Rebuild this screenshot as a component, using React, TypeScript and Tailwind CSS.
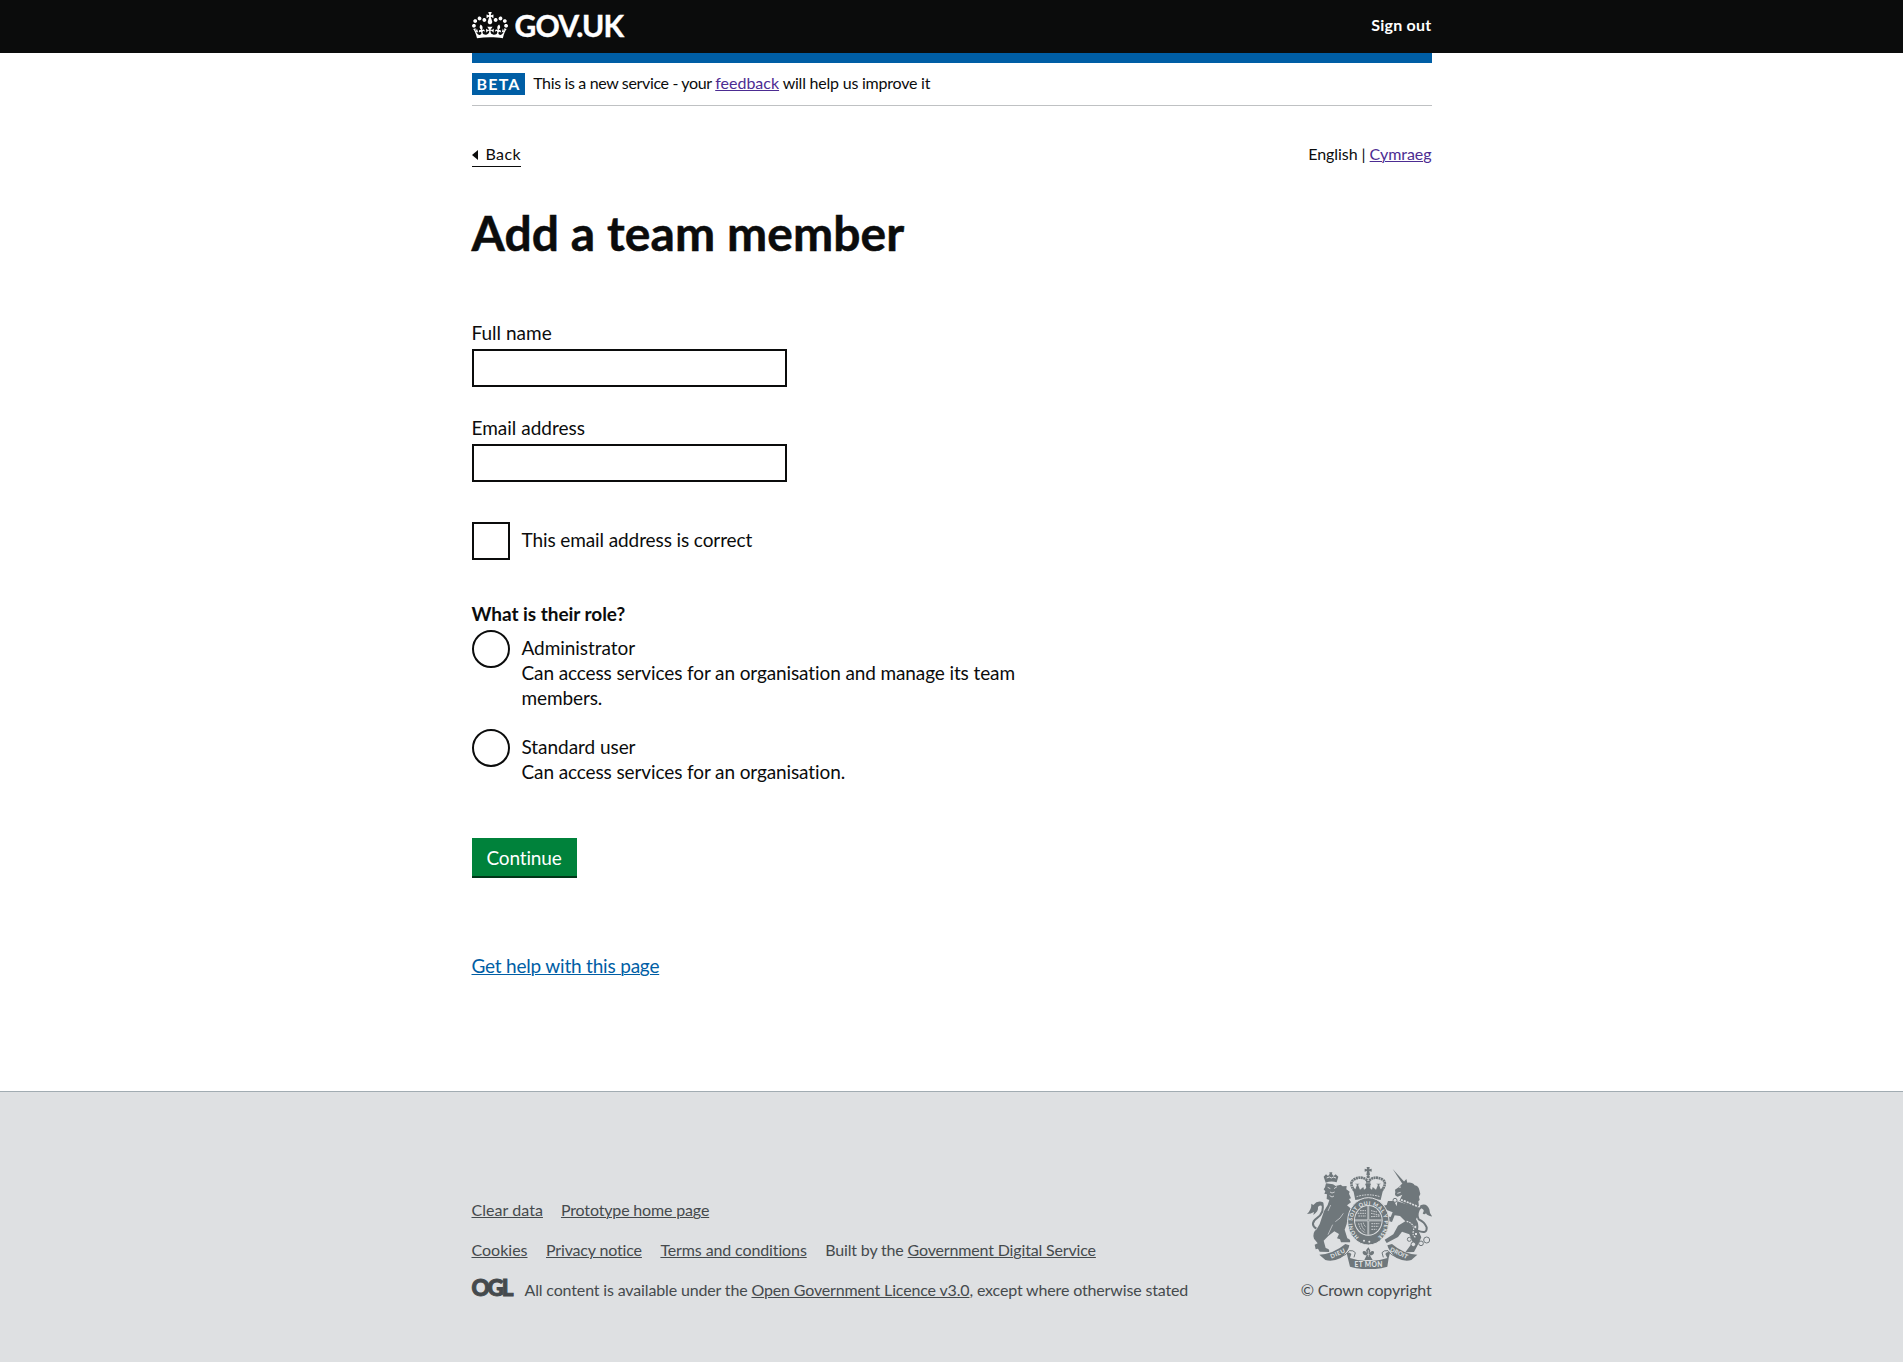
import type { ReactNode } from "react";

function Crown() {
  return (
    <svg aria-hidden="true" viewBox="0 0 132 97" className="mt-3 h-[26.5px] w-9" fill="currentColor">
      <path d="M25 30.2c3.5 1.5 7.7-.2 9.1-3.7 1.5-3.6-.2-7.8-3.9-9.2-3.6-1.4-7.6.3-9.1 3.9-1.4 3.5.3 7.5 3.9 9zM9 39.5c3.6 1.5 7.8-.2 9.2-3.7 1.5-3.6-.2-7.8-3.9-9.1-3.6-1.5-7.6.2-9.1 3.8-1.4 3.5.3 7.5 3.8 9zM4.4 57.2c3.5 1.5 7.7-.2 9.1-3.8 1.5-3.6-.2-7.7-3.9-9.1-3.5-1.5-7.6.3-9.1 3.8-1.4 3.5.3 7.6 3.9 9.1zm38.3-21.4c3.5 1.5 7.7-.2 9.1-3.8 1.5-3.6-.2-7.7-3.9-9.1-3.6-1.5-7.6.3-9.1 3.8-1.3 3.6.4 7.7 3.9 9.1zm64.4-5.6c-3.6 1.5-7.8-.2-9.1-3.7-1.5-3.6.2-7.8 3.8-9.2 3.6-1.4 7.7.3 9.2 3.9 1.3 3.5-.4 7.5-3.9 9zm15.9 9.3c-3.6 1.5-7.7-.2-9.1-3.7-1.5-3.6.2-7.8 3.7-9.1 3.6-1.5 7.7.2 9.2 3.8 1.5 3.5-.3 7.5-3.8 9zm4.7 17.7c-3.6 1.5-7.8-.2-9.2-3.8-1.5-3.6.2-7.7 3.9-9.1 3.6-1.5 7.7.3 9.2 3.8 1.3 3.5-.4 7.6-3.9 9.1zM89.3 35.8c-3.6 1.5-7.8-.2-9.2-3.8-1.4-3.6.2-7.7 3.9-9.1 3.6-1.5 7.7.3 9.2 3.8 1.4 3.6-.3 7.7-3.9 9.1zM69.7 17.7l8.9 4.7V9.3l-8.9 2.8c-.2-.3-.5-.6-.9-.9L72.4 0H59.6l3.5 11.2c-.3.3-.6.5-.9.9l-8.8-2.8v13.1l8.8-4.7c.3.3.6.7.9.9l-5 15.4v.1c-.2.8-.4 1.6-.4 2.4 0 4.1 3.1 7.5 7 8.1h.2c.3 0 .7.1 1 .1.4 0 .7 0 1-.1h.2c4-.6 7.1-4.1 7.1-8.1 0-.8-.1-1.7-.4-2.4V34l-5.1-15.4c.4-.2.7-.6 1-.9zM66 92.8c16.9 0 32.8 1.1 47.1 3.2 4-16.9 8.9-26.7 14-33.5l-9.6-3.4c1 4.9 1.1 7.2 0 10.2-1.5-1.4-3-4.3-4.2-8.7L108.6 76c2.8-2 5-3.2 7.5-3.3-4.4 9.4-10 11.9-13.6 11.2-4.3-.8-6.3-4.6-5.6-7.9 1-4.7 5.7-5.9 8-.5 4.3-8.7-3-11.4-7.6-8.8 7.1-7.2 7.9-13.5 2.1-21.1-8 6.1-8.1 12.3-4.5 20.8-4.7-5.4-12.1-2.5-9.5 6.2 3.4-5.2 7.9-2 7.2 3.1-.6 4.3-6.4 7.8-13.5 7.2-10.3-.9-10.9-8-11.2-13.8 2.5-.5 7.1 1.8 11 7.3L80.2 60c-4.1 4.4-8 5.3-12.3 5.4 1.4-4.4 8-11.6 8-11.6H55.5s6.4 7.2 7.9 11.6c-4.2-.1-8-1-12.3-5.4l1.4 16.4c3.9-5.5 8.5-7.7 10.9-7.3-.3 5.8-.9 12.8-11.1 13.8-7.2.6-12.9-2.9-13.5-7.2-.7-5 3.8-8.3 7.1-3.1 2.7-8.7-4.6-11.6-9.4-6.2 3.7-8.5 3.6-14.7-4.6-20.8-5.8 7.6-5 13.9 2.2 21.1-4.7-2.6-11.9.1-7.7 8.8 2.3-5.5 7.1-4.2 8.1.5.7 3.3-1.3 7.1-5.7 7.9-3.5.7-9-1.8-13.5-11.2 2.5.1 4.7 1.3 7.5 3.3l-4.7-15.4c-1.2 4.4-2.7 7.2-4.3 8.7-1.1-3-.9-5.3 0-10.2l-9.5 3.4c5 6.9 9.9 16.7 14 33.5 14.8-2.1 30.8-3.2 47.7-3.2z" />
    </svg>
  );
}

function CoatOfArms() {
  const ink = "#6f777b";
  const paper = "#dee0e2";
  return (
    <svg aria-hidden="true" viewBox="51 51 375 306" className="h-[102px] w-[125px]" fill={ink}>
      {/* centre crown */}
      <path d="M230 51h9l-1 7 7-2v9l-7-2 2 12h-11l2-12-7 2v-9l7 2z" />
      <circle cx="234.500" cy="80" r="5" />
      <path d="M193 122Q176 98 192 88Q216 76 232 92V124M275 122Q293 98 277 88Q253 76 237 92V124" fill="none" stroke={ink} strokeWidth="8" strokeDasharray="6 1.500" />
      <path d="M188 112l8 6 5-14-6-3h14l-5 3 6 15 10-8 2 8 8-6-5-12h18l-5 12 8 6 2-8 10 8 6-15-5-3h14l-6 3 5 14 9-6-9 38Q234 142 196 150z" />
      <path d="M200 140Q234 129 270 140" fill="none" stroke={paper} strokeWidth="3" strokeDasharray="5 3" />
      {/* lion crown */}
      <path d="M107 98l-6-18 7-7 6 5 5-6-1-5h9l-1 5 5 6 6-5 8 7-5 17q-16-5-33 1z" />
      <path d="M110 84l8-3 6 3 6-3 8 3" fill="none" stroke={paper} strokeWidth="3" />
      {/* lion */}
      <path d="M108 100l-3 12-4 6 5 6-3 7 8 2-1 14 8 3-5 15Q99 184 95 204Q91 222 80 238Q66 248 72 266L83 280l-9 4 3 14 7-2 5 9 28 1q4-9-10-12l-6-22Q116 256 133 244l14 8-6 13 9 3 3 9 27 0q3-9-8-12l-8-26Q172 222 172 208l12 22 4-30-3-22-14-12 12-9-6-10 6-2-6-14 2-6-10-7 1-10-12 1-6-5-15 4-8-5z" />
      <path d="M113 112l8 4M132 116l9-6M120 126l6 3 8-3M119 137l7 4 6-3" fill="none" stroke={paper} strokeWidth="2.500" />
      <path d="M122 165l-8 18M136 215Q152 206 160 190M128 224l-14 30" fill="none" stroke={paper} strokeWidth="2" />
      <path d="M79 236Q58 222 80 205Q106 187 96 158" fill="none" stroke={ink} strokeWidth="6" />
      <path d="M100 158Q84 149 70 165L64 161Q65 178 51 192Q63 192 72 186L70 195Q86 184 84 172Q86 163 100 168z" />
      {/* unicorn */}
      <path d="M308 57l36 40-7 4z" />
      <path d="M339 98l10-11 3 11q16-2 22 8 12 2 14 14l3 12-4 8 2 10-4 4 3 24Q364 172 328 152l9-18-14 6q-11-2-7-13l-1-8 11-7z" />
      <path d="M327 112l6-1M322 130l10-3" stroke={paper} strokeWidth="2.500" />
      <path d="M325 147Q350 155 386 171" fill="none" stroke={paper} strokeWidth="5" strokeDasharray="6 3" />
      <path d="M322 154L386 174Q386 195 378 208Q388 222 384 240l10 22-8 18-14 26-26 1 10-14 12-16-10-24-22-8-12 16-34 18-6-10 26-16 14-26 22-13-16-16-16-2-8 20-11-3-5-14 12 2 6-14-20-8-8-12 10-2 4-12 18 0 8 16z" />
      <circle cx="315" cy="151" r="6" fill={paper} stroke={ink} strokeWidth="3" />
      <path d="M383 242Q412 254 410 232Q404 216 386 208Q376 186 396 168" fill="none" stroke={ink} strokeWidth="6" />
      <path d="M391 166Q410 157 418 178Q418 190 427 200Q412 198 408 190Q402 196 398 190Q407 178 391 174z" />
      <path d="M350 214Q376 222 370 244Q366 256 377 262" fill="none" stroke={paper} strokeWidth="3.500" strokeDasharray="5 3" />
      <g fill={paper} stroke={ink} strokeWidth="3">
        <circle cx="358" cy="268" r="6" />
        <circle cx="370" cy="283" r="7" />
        <circle cx="378" cy="252" r="5" />
        <circle cx="376" cy="231" r="5" />
        <circle cx="393" cy="280" r="7" />
        <circle cx="410" cy="270" r="9" />
      </g>
      {/* garter and shield */}
      <ellipse cx="235" cy="214" rx="62" ry="71" stroke={paper} strokeWidth="3" />
      <ellipse cx="235" cy="211" rx="43" ry="46" fill={paper} />
      <ellipse cx="235" cy="211" rx="40" ry="43" />
      <path d="M235 168v86M195 211h80" stroke={paper} strokeWidth="5" />
      <path d="M235 168v86M195 211h80" stroke={ink} strokeWidth="1.500" />
      <path d="M203 190h25M205 198h23M210 182h18M243 182l18 4M243 190l25 5M243 200l28-2M244 221h24M244 229h22M244 238h16M206 220q4 22 20 28M213 219q3 16 14 24M220 218q2 9 8 13" fill="none" stroke={paper} strokeWidth="2.500" strokeDasharray="5 2" />
      <path id="garter" d="M207 261A48 53 0 1 1 263 261" fill="none" />
      <text fill={paper} fontFamily="Lato, sans-serif" fontWeight="900" fontSize="16" letterSpacing="1.500">
        <textPath href="#garter">HONI SOIT QUI MAL Y PENSE</textPath>
      </text>
      <circle cx="222" cy="272" r="3" fill={paper} />
      <circle cx="238" cy="275" r="3" fill={paper} />
      {/* motto scroll and fleur */}
      <path d="M235 292l6 9-2 8q5-9 12-5 4 8-6 12h-5l3 6 5 8H223l4-8 3-6h-5q-10-4-6-12 7-4 12 5l-3-8z" />
      <path d="M231 313h8M235 300v20" stroke={paper} strokeWidth="2" />
      <path d="M88 314Q130 312 166 282L178 286Q176 304 152 324Q128 336 106 330z" />
      <path d="M382 314Q340 312 306 282L292 286Q296 304 320 324Q344 336 364 330z" />
      <path d="M170 310Q178 304 184 312L180 324Q236 344 292 324L286 312Q292 302 300 308L296 324L292 350Q236 366 180 350z" />
      <path d="M150 322Q172 314 178 302Q190 300 196 308L192 322M320 322Q300 314 294 302Q282 300 276 308L280 322" fill="none" stroke={ink} strokeWidth="3" />
      <g fill={paper} fontFamily="Lato, sans-serif" fontWeight="900" textAnchor="middle">
        <text fontSize="18" letterSpacing="1" transform="translate(146 316) rotate(-25)">DIEU</text>
        <text fontSize="18" transform="translate(324 315) rotate(25)">DROIT</text>
        <text fontSize="20" x="236" y="352" letterSpacing="1">ET MON</text>
      </g>
    </svg>
  );
}

function Link({ children, className = "" }: { children: ReactNode; className?: string }) {
  return (
    <a href="#" className={`underline decoration-1 underline-offset-[1px] ${className}`}>
      {children}
    </a>
  );
}

function Field({ id, label, className }: { id: string; label: string; className: string }) {
  return (
    <div className={className}>
      <label htmlFor={id} className="block w-fit">{label}</label>
      <input id={id} className="mt-1 block h-[38px] w-[315px] border-2 border-[#0b0c0c] bg-white px-1" />
    </div>
  );
}

function Choice({ title, children, className = "" }: { title: string; children?: ReactNode; className?: string }) {
  return (
    <label className={`flex gap-3 ${className}`}>
      <input type="radio" name="role" className="size-[38px] shrink-0 appearance-none rounded-full border-2 border-[#0b0c0c]" />
      <span className="pt-[5px] tracking-[-0.05px]">
        {title}
        <span className="block tracking-[-0.11px]">{children}</span>
      </span>
    </label>
  );
}

export default function App() {
  return (
    <div className="flex min-h-[1362px] flex-col bg-white font-['Lato',sans-serif] text-[19px] leading-[25px] text-[#0b0c0c]">
      <header className="h-[53px] bg-[#0b0c0c] text-white">
        <div className="mx-auto flex w-[960px] items-start">
          <a href="#" className="flex items-start gap-[7px]">
            <Crown />
            <span className="pt-[10px] text-[30px] leading-[30px] font-bold tracking-[-0.8px] [-webkit-text-stroke:0.4px_white]">GOV.UK</span>
          </a>
          <a href="#" className="ml-auto pt-[15px] text-base leading-5 font-bold tracking-[0.25px]">Sign out</a>
        </div>
      </header>

      <div className="mx-auto w-[960px] flex-1">
        <div className="h-[10px] bg-[#005ea5]" />
        <div className="flex h-[43px] items-start border-b border-[#bfc1c3] pt-[10px] text-base leading-5">
          <strong className="h-[22px] bg-[#005ea5] pr-1 pl-[5px] text-base leading-[22px] font-bold tracking-[1.2px] text-white">BETA</strong>
          <span className="ml-[8.5px]">
            <span className="tracking-[-0.35px]">This is a new service - your </span>
            <Link className="text-[#4c2c92]">feedback</Link>
            <span className="tracking-[-0.22px]"> will help us improve it</span>
          </span>
        </div>

        <div className="mt-[38px] flex justify-between text-base leading-5">
          <a href="#" className="flex h-[23px] items-start border-b border-[#0b0c0c] tracking-[0.4px]">
            <svg aria-hidden="true" viewBox="0 0 6 10" className="mt-[6px] mr-2 h-[10px] w-[6px]" fill="currentColor">
              <path d="M0 5 6 0v10z" />
            </svg>
            Back
          </a>
          <span className="tracking-[-0.05px]">
            English | <Link className="text-[#4c2c92]">Cymraeg</Link>
          </span>
        </div>

        <main>
          <h1 className="mt-[41px] text-[48px] leading-[50px] font-bold tracking-[0.08px] [-webkit-text-stroke:0.5px_#0b0c0c]">Add a team member</h1>
          <form>
            <Field id="full-name" label="Full name" className="mt-[62px]" />
            <Field id="email" label="Email address" className="mt-7" />
            <label className="mt-10 flex gap-3 tracking-[-0.1px]">
              <input type="checkbox" className="size-[38px] shrink-0 appearance-none border-2 border-[#0b0c0c]" />
              <span className="pt-[5px]">This email address is correct</span>
            </label>
            <fieldset className="mt-[41px] w-[550px]">
              <legend className="mb-1 font-bold tracking-[-0.04px]">What is their role?</legend>
              <Choice title="Administrator">Can access services for an organisation and manage its team members.</Choice>
              <Choice title="Standard user" className="mt-[19px]">Can access services for an organisation.</Choice>
            </fieldset>
            <button type="button" className="mt-[54px] block h-10 w-[105px] border-b-2 border-[#003618] bg-[#00823b] pt-px tracking-[-0.15px] text-white">
              Continue
            </button>
          </form>
          <p className="mt-[75px] tracking-[-0.2px]">
            <Link className="text-[#005ea5]">Get help with this page</Link>
          </p>
        </main>
      </div>

      <footer className="h-[271px] border-t border-[#a1acb2] bg-[#dee0e2] text-base leading-5 text-[#454a4d]">
        <div className="mx-auto flex w-[960px] items-start justify-between pt-[75px]">
          <div className="pt-[33px] tracking-[-0.16px]">
            <div className="flex gap-[18px]">
              <Link className="tracking-[0.05px]">Clear data</Link>
              <Link>Prototype home page</Link>
            </div>
            <div className="mt-5 flex gap-[18.5px]">
              <Link className="tracking-normal">Cookies</Link>
              <Link>Privacy notice</Link>
              <Link className="tracking-[-0.12px]">Terms and conditions</Link>
              <span className="tracking-[-0.16px]">
                Built by the <Link>Government Digital Service</Link>
              </span>
            </div>
            <div className="mt-5 flex">
              <span className="-mt-px w-[53px] text-[22.500px] leading-[18px] font-black tracking-[-2.2px] [-webkit-text-stroke:1px_#454a4d]">OGL</span>
              <span className="tracking-[-0.15px]">
                All content is available under the <Link>Open Government Licence v3.0</Link>, except where otherwise stated
              </span>
            </div>
          </div>
          <div className="flex flex-col items-end">
            <CoatOfArms />
            <span className="mt-[11px] tracking-[-0.2px]">© Crown copyright</span>
          </div>
        </div>
      </footer>
    </div>
  );
}
